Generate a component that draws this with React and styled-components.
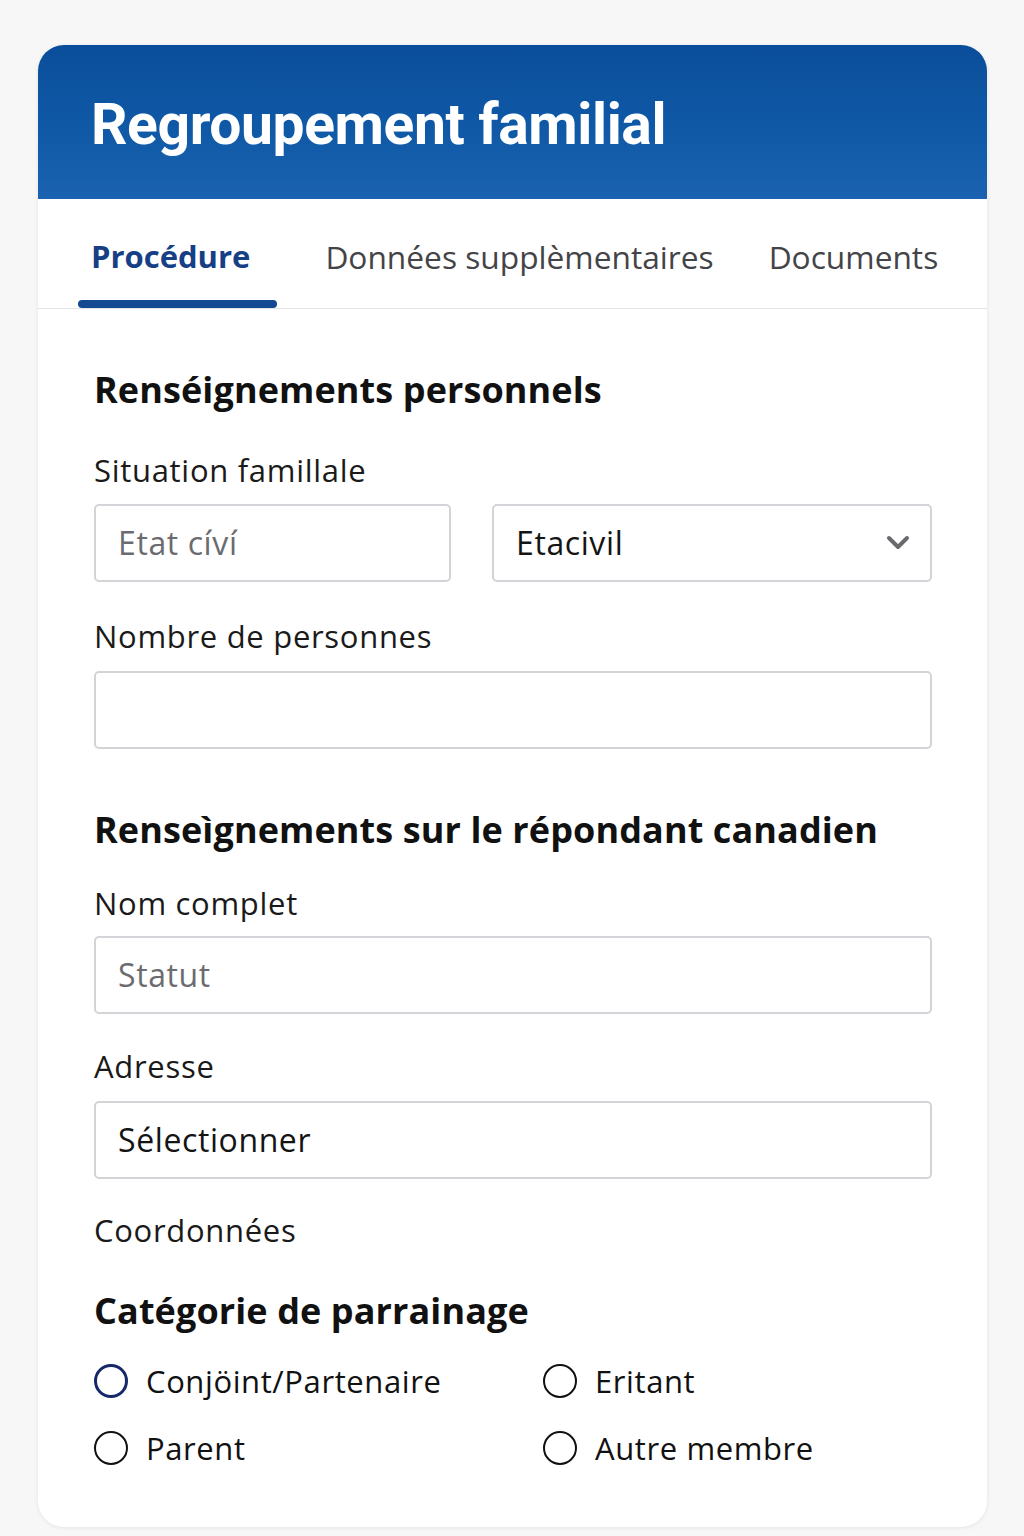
import styled, { createGlobalStyle } from "styled-components";

const GlobalStyle = createGlobalStyle`
  html, body {
    margin: 0;
    padding: 0;
    background: #f7f7f8;
    font-family: "Open Sans", "Liberation Sans", sans-serif;
  }
`;

const Page = styled.div`
  padding: 45px 37px 9px 38px;
`;

const Card = styled.div`
  background: #fff;
  border-radius: 26px;
  overflow: hidden;
  box-shadow: 0 1px 4px rgba(0, 0, 0, 0.08);
`;

const Header = styled.div`
  height: 154px;
  display: flex;
  align-items: flex-start;
  padding: 46px 0 0 53px;
  background: linear-gradient(180deg, #0a4e9b 0%, #105aa7 60%, #1b63b0 100%);
  box-sizing: border-box;
`;

const Title = styled.h1`
  margin: 0;
  color: #fff;
  font-family: Roboto, "Liberation Sans", sans-serif;
  font-size: 57px;
  line-height: 1.2;
  font-weight: 700;
  letter-spacing: -0.4px;
`;

const Tabs = styled.div`
  height: 110px;
  display: flex;
  align-items: stretch;
  padding-left: 40px;
  border-bottom: 1px solid #e3e3e6;
  box-sizing: border-box;
`;

const Tab = styled.div`
  position: relative;
  padding: 39px ${(p) => (p.$active ? "27px" : "0")} 0 ${(p) => (p.$active ? "13px" : "0")};
  margin-right: ${(p) => p.$gap}px;
  font-size: ${(p) => (p.$active ? 31 : 31.7)}px;
  line-height: 1.2;
  font-weight: ${(p) => (p.$active ? 700 : 400)};
  color: ${(p) => (p.$active ? "#173f86" : "#444448")};
  &::after {
    content: "";
    display: ${(p) => (p.$active ? "block" : "none")};
    position: absolute;
    left: 0;
    right: 0;
    bottom: 0;
    height: 8px;
    border-radius: 4px;
    background: #134a92;
  }
`;

const Body = styled.div`
  padding: 59px 55px 60px 56px;
`;

const SectionTitle = styled.h2`
  margin: 0 0 ${(p) => p.$mb || 0}px;
  font-size: 36px;
  line-height: 1.2;
  font-weight: 700;
  color: #111;
  letter-spacing: 0.1px;
`;

const Label = styled.div`
  font-size: 31px;
  line-height: 1.2;
  letter-spacing: 0.7px;
  color: #1a1a1a;
  margin-bottom: ${(p) => p.$mb ?? 15}px;
`;

const Row = styled.div`
  display: grid;
  grid-template-columns: 357px 1fr;
  gap: 41px;
  margin-bottom: ${(p) => p.$mb || 0}px;
`;

const Field = styled.div`
  height: 78px;
  border: 2px solid #d4d4d8;
  border-radius: 5px;
  box-sizing: border-box;
  display: flex;
  align-items: center;
  justify-content: space-between;
  padding: 0 20px 0 22px;
  font-size: 32px;
  line-height: 1.2;
  letter-spacing: 0.6px;
  color: ${(p) => (p.$placeholder ? "#6b6b70" : "#141414")};
  margin-bottom: ${(p) => p.$mb || 0}px;
`;

const Radios = styled.div`
  display: grid;
  grid-template-columns: 449px 1fr;
  row-gap: 30px;
  margin-top: 30px;
`;

const RadioItem = styled.label`
  display: flex;
  align-items: center;
  gap: 18px;
  font-size: 31px;
  line-height: 1.2;
  letter-spacing: 0.6px;
  color: #111;
`;

const Circle = styled.span`
  width: 34px;
  height: 34px;
  border-radius: 50%;
  box-sizing: border-box;
  border: ${(p) => (p.$active ? "3.5px solid #16286a" : "2px solid #111")};
  flex-shrink: 0;
`;

const Chevron = () => (
  <svg width="24" height="16" viewBox="0 0 24 16">
    <path
      d="M3 3 L12 12 L21 3"
      fill="none"
      stroke="#6a6a6e"
      strokeWidth="4"
      strokeLinecap="round"
      strokeLinejoin="round"
    />
  </svg>
);

const Radio = ({ label, active }) => (
  <RadioItem>
    <Circle $active={active} />
    {label}
  </RadioItem>
);

export default function App() {
  return (
    <>
      <GlobalStyle />
      <Page>
        <Card>
          <Header>
            <Title>Regroupement familial</Title>
          </Header>
          <Tabs>
            <Tab $active $gap={48}>Procédure</Tab>
            <Tab $gap={55}>Données supplèmentaires</Tab>
            <Tab $gap={0}>Documents</Tab>
          </Tabs>
          <Body>
            <SectionTitle $mb={41}>Renséignements personnels</SectionTitle>
            <Label>Situation famillale</Label>
            <Row $mb={36}>
              <Field $placeholder>Etat cíví</Field>
              <Field>
                Etacivil
                <Chevron />
              </Field>
            </Row>
            <Label>Nombre de personnes</Label>
            <Field $mb={59} />
            <SectionTitle $mb={34}>Renseìgnements sur le répondant canadien</SectionTitle>
            <Label $mb={14}>Nom complet</Label>
            <Field $placeholder $mb={34}>Statut</Field>
            <Label $mb={16}>Adresse</Label>
            <Field $mb={33}>Sélectionner</Field>
            <Label $mb={40}>Coordonnées</Label>
            <SectionTitle>Catégorie de parrainage</SectionTitle>
            <Radios>
              <Radio label="Conjöint/Partenaire" active />
              <Radio label="Eritant" />
              <Radio label="Parent" />
              <Radio label="Autre membre" />
            </Radios>
          </Body>
        </Card>
      </Page>
    </>
  );
}
